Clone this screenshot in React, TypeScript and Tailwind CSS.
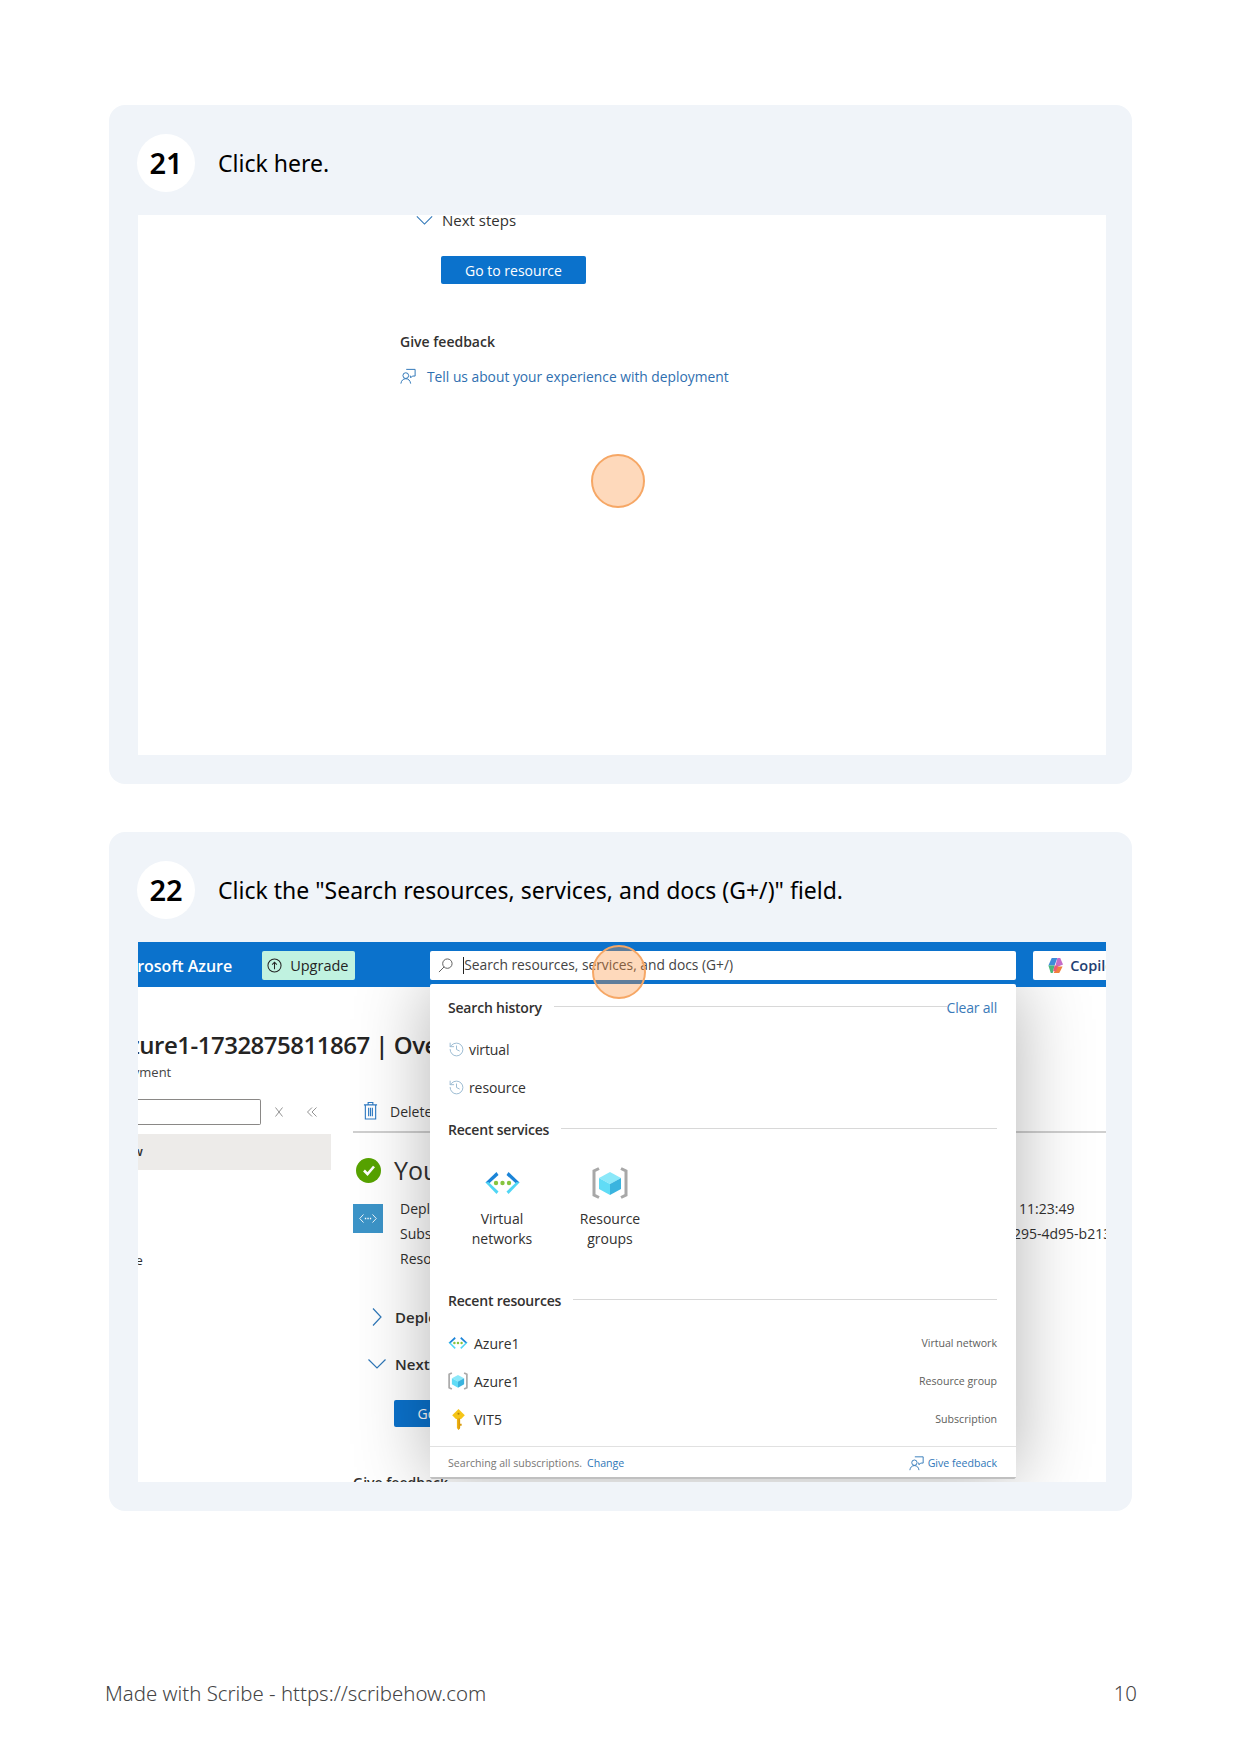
import { History } from "lucide-react";

const BLUE = "#0b72cc";

function ClickDot({ className }: { className: string }) {
  return (
    <div
      className={`absolute z-40 w-[54px] h-[54px] rounded-full bg-[#fb923c]/35 border-2 border-[#f6a765] ${className}`}
    />
  );
}

function StepHeader({ n, text }: { n: number; text: string }) {
  return (
    <div className="flex items-center h-[58px] ml-[28px] mt-[29px]">
      <div className="w-[58px] h-[58px] rounded-full bg-white flex items-center justify-center text-[29px] font-semibold text-black">
        {n}
      </div>
      <div className="ml-[23px] text-[23px] text-black leading-none">{text}</div>
    </div>
  );
}

function FeedbackIcon({ className }: { className: string }) {
  return (
    <svg viewBox="0 0 18 18" fill="none" stroke="#2f77b8" strokeWidth="1.1" className={className}>
      <circle cx="6.5" cy="8" r="3.2" />
      <path d="M1 17c.5-3.5 2.5-5.5 5.5-5.5s5 2 5.5 5.5" />
      <path d="M7 1h10v7.5h-3l-2 2v-2h-1" />
    </svg>
  );
}

function ChevronDown({ className }: { className: string }) {
  return (
    <svg viewBox="0 0 18 10" fill="none" stroke="#2f77b8" strokeWidth="1.2" className={className}>
      <path d="M.5.5 9 9 17.500.5" />
    </svg>
  );
}

function VnetIcon({ className }: { className: string }) {
  return (
    <svg viewBox="0 0 36 24" className={className}>
      <path d="M12 1 1 11.500l3 1.500L14 4z" fill="#1b84d8" />
      <path d="M1 11.500 12 23l2-2.500L4 11z" fill="#50d6f5" />
      <path d="M24 1l11 10.500-3 1.500L22 4z" fill="#1b84d8" />
      <path d="M35 11.500 24 23l-2-2.500L32 11z" fill="#50d6f5" />
      <circle cx="11.500" cy="12" r="2.200" fill="#86c440" />
      <circle cx="18" cy="12" r="2.200" fill="#86c440" />
      <circle cx="24.500" cy="12" r="2.200" fill="#86c440" />
    </svg>
  );
}

function ResourceGroupIcon({ className }: { className: string }) {
  return (
    <svg viewBox="0 0 36 32" className={className}>
      <path d="M7 1.500 2 4v24l5 2.500M29 1.500 34 4v24l-5 2.500" fill="none" stroke="#a8a8a8" strokeWidth="3" />
      <path d="M18 5 7 11l11 6 11-6z" fill="#8be8f9" />
      <path d="M7 11v11l11 6V17z" fill="#60dcf6" />
      <path d="M29 11v11l-11 6V17z" fill="#3ab4df" />
    </svg>
  );
}

function KeyIcon({ className }: { className: string }) {
  return (
    <svg viewBox="0 0 14 20" className={className}>
      <path d="M7 0 1 6l3.500 3.500H9.500L13 6z" fill="#f5c518" />
      <path d="M5.500 9h3v9L7 20l-1.500-2z" fill="#eeb211" />
      <path d="M7 9v11l1.500-2v-2H10v-2H8.500V9z" fill="#d99a0a" />
      <circle cx="7" cy="4.500" r="1" fill="#b88408" />
    </svg>
  );
}

function CopilotIcon({ className }: { className: string }) {
  return (
    <svg viewBox="0 0 18 18" className={className}>
      <path d="M5 1h6L8 9H1.500z" fill="#3d8bd9" />
      <path d="M11 1h3l3 7-5 2-3-1z" fill="#c56cc8" />
      <path d="M11 10h5.500L13 17H7z" fill="#f0803c" />
      <path d="M1.500 9H8L6 17H4z" fill="#48b87a" />
      <path d="M8 9h4l-2.500 6H6.500z" fill="#e85a7a" />
    </svg>
  );
}

function SectionHead({ label, right }: { label: string; right?: string }) {
  return (
    <div className="flex items-center h-[20px] text-[14px]">
      <span className="font-semibold text-[#323130] tracking-[-0.2px]">{label}</span>
      <span className="flex-1 h-[1px] bg-[#d8d8d8] ml-[12px] -translate-y-[1px]" />
      {right && <span className="text-[#3a7ab8] text-[14px] tracking-[-0.2px]">{right}</span>}
    </div>
  );
}

function HistoryRow({ label, className }: { label: string; className: string }) {
  return (
    <div className={`flex items-center h-[20px] text-[14px] tracking-[-0.1px] text-[#323130] ${className}`}>
      <History className="w-[17px] h-[17px] text-[#9dbcd2] mr-[4px]" strokeWidth={1.4} />
      {label}
    </div>
  );
}

function ResourceRow({ icon, name, kind }: { icon: React.ReactNode; name: string; kind: string }) {
  return (
    <div className="flex items-center h-[38px]">
      <span className="w-[20px] flex justify-center">{icon}</span>
      <span className="ml-[6px] text-[14px] text-[#323130]">{name}</span>
      <span className="ml-auto mt-[2px] text-[10.6px] text-[#605e5c]">{kind}</span>
    </div>
  );
}

function SearchDropdown() {
  return (
    <>
      {/* shadow sits under the top bar, the panel itself sits over it */}
      <div className="absolute z-10 left-[292px] top-[42px] w-[586px] h-[495px] shadow-[0_0_70px_rgba(0,0,0,0.3)]" />
      <div className="absolute z-30 left-[292px] top-[42px] w-[586px] h-[495px] bg-white rounded-[2px] border-b-2 border-[#c0c0c0] flex flex-col">
        <div className="flex-1 px-[18px] pr-[19px] pt-[13px]">
          <SectionHead label="Search history" right="Clear all" />
          <HistoryRow label="virtual" className="mt-[22px]" />
          <HistoryRow label="resource" className="mt-[18px]" />
          <div className="mt-[22px]">
            <SectionHead label="Recent services" />
          </div>
          <div className="flex mt-[28px] text-[14px] leading-[20px] text-[#323130] text-center">
            <div className="w-[108px] flex flex-col items-center">
              <VnetIcon className="w-[37px] h-[24px] mt-[4px]" />
              <div className="mt-[14px]">Virtual<br />networks</div>
            </div>
            <div className="w-[108px] flex flex-col items-center">
              <ResourceGroupIcon className="w-[36px] h-[32px]" />
              <div className="mt-[10px]">Resource<br />groups</div>
            </div>
          </div>
          <div className="mt-[41px]">
            <SectionHead label="Recent resources" />
          </div>
          <div className="mt-[14px]">
            <ResourceRow icon={<VnetIcon className="w-[20px] h-[14px]" />} name="Azure1" kind="Virtual network" />
            <ResourceRow icon={<ResourceGroupIcon className="w-[20px] h-[18px]" />} name="Azure1" kind="Resource group" />
            <ResourceRow icon={<KeyIcon className="w-[15px] h-[21px]" />} name="VIT5" kind="Subscription" />
          </div>
        </div>
        <div className="h-[31px] border-t border-[#e1e1e1] px-[18px] pr-[19px] pt-[4px] flex items-center text-[10.6px]">
          <span className="text-[#797775]">Searching all subscriptions.</span>
          <span className="ml-[5px] text-[#2f77b8]">Change</span>
          <span className="ml-auto flex items-center text-[#2f77b8]">
            <FeedbackIcon className="w-[15px] h-[15px] mr-[4px]" />
            Give feedback
          </span>
        </div>
      </div>
    </>
  );
}

function AzureBackground() {
  return (
    <div className="h-[495px] text-[#323130]">
      <div className="h-[34px] mt-[41px] -ml-[25px] text-[24px] leading-[34px] font-semibold tracking-[-0.5px] text-[#252423] whitespace-nowrap">
        Azure1-1732875811867 | Overview
      </div>
      <div className="-ml-[41px] mt-[1px] h-[18px] text-[13px] leading-[18px] text-[#444]">Deployment</div>
      <div className="flex mt-[18px]">
        <div className="w-[193px] shrink-0">
          <div className="flex items-center h-[26px]">
            <div className="w-[123px] h-full border border-l-0 border-[#8a8886] rounded-r-[2px]" />
            <svg viewBox="0 0 8 10" fill="none" stroke="#777" strokeWidth="0.8" className="w-[8px] h-[10px] ml-[14px]">
              <path d="M.5.5l7 9M7.500.5l-7 9" />
            </svg>
            <svg viewBox="0 0 10 10" fill="none" stroke="#777" strokeWidth="0.8" className="w-[10px] h-[10px] ml-[24px]">
              <path d="M5 .5.500 5 5 9.500M9.500.5 5 5l4.500 4.500" />
            </svg>
          </div>
          <div className="mt-[9px] h-[36px] bg-[#edebe9] flex items-center -indent-[54px] text-[13px] font-semibold overflow-hidden whitespace-nowrap">
            Overview
          </div>
          <div className="mt-[80px] -ml-[52px] text-[13px] leading-[20px] whitespace-nowrap">Template</div>
        </div>
        <div className="ml-[22px] w-[753px] shrink-0">
          <div className="h-[34px] border-b-2 border-[#cfcfcf] flex items-start">
            <svg viewBox="0 0 16 20" fill="none" stroke="#2f7bc4" strokeWidth="1.2" className="w-[15px] h-[19px] ml-[10px] mt-[2px]">
              <path d="M1 4h14M5.500 4V1.500h5V4M2.500 4v15h11V4M6 7v9M8 7v9M10 7v9" />
            </svg>
            <span className="ml-[12px] mt-[2px] text-[14px]">Delete</span>
          </div>
          <div className="flex items-center h-[26px] mt-[24px]">
            <div className="w-[25px] h-[25px] ml-[3px] rounded-full bg-[#57a300] flex items-center justify-center">
              <svg viewBox="0 0 16 16" fill="none" stroke="white" strokeWidth="2.6" className="w-[16px] h-[16px]">
                <path d="M3 8.500 6.500 12 13 4.500" />
              </svg>
            </div>
            <span className="ml-[13px] text-[25px] leading-none">Your deployment is complete</span>
          </div>
          <div className="flex mt-[21px]">
            <div className="w-[30px] h-[29px] shrink-0 bg-[#3c94c8] flex items-center justify-center">
              <svg viewBox="0 0 20 12" fill="none" stroke="white" strokeWidth="1" className="w-[18px] h-[11px]">
                <path d="M5 1.500.8 6 5 10.500M15 1.500 19.200 6 15 10.500" />
                <path d="M6.500 6h7" strokeDasharray="1.500 1.300" strokeWidth="1.500" />
              </svg>
            </div>
            <div className="ml-[17px] text-[14px] leading-[25px] -mt-[8px]">
              <div className="flex whitespace-nowrap">
                <span className="w-[619px]">Deployment name</span>
                <span>11:23:49</span>
              </div>
              <div className="flex whitespace-nowrap">
                <span className="w-[605px]">Subscription</span>
                <span>1295-4d95-b213</span>
              </div>
              <div>Resource group</div>
            </div>
          </div>
          <div className="flex items-center h-[22px] mt-[35px] text-[15px] font-semibold">
            <svg viewBox="0 0 10 18" fill="none" stroke="#2f77b8" strokeWidth="1.2" className="w-[10px] h-[18px] ml-[19px]">
              <path d="M1 .5 9 9 1 17.500" />
            </svg>
            <span className="ml-[13px]">Deployment details</span>
          </div>
          <div className="flex items-center h-[22px] mt-[25px] text-[15px] font-semibold">
            <ChevronDown className="w-[18px] h-[10px] ml-[15px]" />
            <span className="ml-[9px]">Next steps</span>
          </div>
          <div className="ml-[41px] mt-[25px] w-[144px] h-[27px] rounded-[2px] bg-[#0b72cc] text-white text-[14px] font-medium flex items-center justify-center">
            Go to resource
          </div>
          <div className="mt-[46px] text-[14px] font-semibold leading-[20px] whitespace-nowrap">Give feedback</div>
        </div>
      </div>
    </div>
  );
}

export default function App() {
  return (
    <div className="w-[1241px] h-[1754px] bg-white flex flex-col font-['Noto_Sans',sans-serif]">
      <div className="mx-[109px] mt-[105px] w-[1023px] h-[679px] rounded-[16px] bg-[#f0f4f9] flex flex-col">
        <StepHeader n={21} text="Click here." />
        <div className="relative mt-[23px] ml-[29px] w-[968px] h-[540px] bg-white overflow-hidden font-['Open_Sans',sans-serif]">
          <div className="flex items-center ml-[278px] -mt-[6px] h-[22px]">
            <ChevronDown className="w-[17px] h-[9px]" />
            <span className="ml-[9px] text-[15px] text-[#323130]">Next steps</span>
          </div>
          <div className="ml-[303px] mt-[25px] w-[145px] h-[28px] rounded-[2px] bg-[#0b72cc] text-white text-[14px] font-medium flex items-center justify-center">
            Go to resource
          </div>
          <div className="ml-[262px] mt-[46px] h-[22px] flex items-center text-[14px] font-semibold text-[#323130]">
            Give feedback
          </div>
          <div className="ml-[262px] mt-[14px] h-[22px] flex items-center text-[13.8px] text-[#2f6fb0]">
            <FeedbackIcon className="w-[16px] h-[17px] -mt-[2px]" />
            <span className="ml-[11px]">Tell us about your experience with deployment</span>
          </div>
          <ClickDot className="left-[453px] top-[239px]" />
        </div>
      </div>

      <div className="mx-[109px] mt-[48px] w-[1023px] h-[679px] rounded-[16px] bg-[#f0f4f9] flex flex-col">
        <StepHeader n={22} text={'Click the "Search resources, services, and docs (G+/)" field.'} />
        <div className="relative mt-[23px] ml-[29px] w-[968px] h-[540px] bg-white overflow-hidden font-['Open_Sans',sans-serif]">
          <div className="relative z-20 h-[45px] flex items-center pt-[2px]" style={{ backgroundColor: BLUE }}>
            <span className="-ml-[28px] shrink-0 text-[16px] font-semibold text-white whitespace-nowrap">Microsoft Azure</span>
            <div className="ml-[30px] w-[93px] h-[29px] shrink-0 rounded-[2px] bg-[#c0f2e0] flex items-center text-[14.5px] font-medium text-[#242424]">
              <svg viewBox="0 0 16 16" fill="none" stroke="#242424" strokeWidth="1.100" className="w-[15px] h-[15px] ml-[5px] mr-[8px]">
                <circle cx="8" cy="8" r="7" />
                <path d="M8 12V4.500M5.500 7 8 4.500 10.500 7" />
              </svg>
              Upgrade
            </div>
            <div className="ml-[75px] w-[586px] h-[29px] shrink-0 rounded-[2px] bg-white flex items-center text-[13.8px] text-[#444]">
              <svg viewBox="0 0 16 16" fill="none" stroke="#555" strokeWidth="1" className="w-[15px] h-[15px] ml-[8px]">
                <circle cx="10" cy="6" r="5" />
                <path d="M6.500 9.500 1 15" />
              </svg>
              <span className="ml-[10px] w-[1px] h-[17px] bg-[#222]" />
              <span>Search resources, services, and docs (G+/)</span>
            </div>
            <div className="ml-[17px] w-[90px] h-[29px] shrink-0 rounded-[2px] bg-white flex items-center text-[14.5px] font-semibold text-[#1f3f73] whitespace-nowrap">
              <CopilotIcon className="w-[17px] h-[17px] ml-[14px] mr-[6px]" />
              Copilot
            </div>
          </div>
          <AzureBackground />
          <SearchDropdown />
          <ClickDot className="left-[454px] top-[3px]" />
        </div>
      </div>

      <div className="mx-[105px] mt-[169px] w-[1032px] flex justify-between text-[20.4px] font-light text-[#444] leading-[26px]">
        <span>Made with Scribe - https://scribehow.com</span>
        <span>10</span>
      </div>
    </div>
  );
}
